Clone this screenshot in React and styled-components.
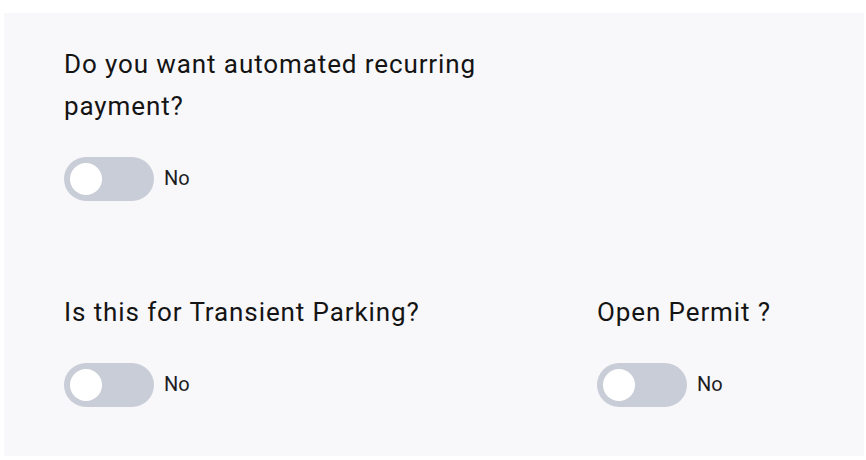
import React, { useState } from "react";
import styled, { createGlobalStyle } from "styled-components";

const Global = createGlobalStyle`
  html, body { margin: 0; padding: 0; background: #ffffff; }
  body { font-family: Roboto, "Liberation Sans", Arial, sans-serif; }
  * { box-sizing: border-box; }
`;

const Panel = styled.section`
  margin: 13px 0 0 4px;
  width: 860px;
  height: 443px;
  background: #f8f8fa;
  padding: 30px 0 0 60px;
  display: grid;
  grid-template-columns: 533px 1fr;
  grid-template-rows: auto auto;
  row-gap: 90px;
  align-content: start;
`;

const Field = styled.div`
  display: flex;
  flex-direction: column;
  gap: 30px;
  grid-column: ${(p) => (p.$full ? "1 / -1" : "auto")};
`;

const Question = styled.h3`
  margin: 0;
  font-family: Roboto, "Liberation Sans", sans-serif;
  font-size: 26px;
  letter-spacing: 0.9px;
  line-height: 42px;
  font-weight: 400;
  color: #141414;
  max-width: ${(p) => (p.$narrow ? "450px" : "none")};
`;

const ToggleRow = styled.label`
  display: flex;
  align-items: center;
  gap: 10px;
  cursor: pointer;
`;

const Track = styled.span`
  position: relative;
  display: inline-block;
  width: 90px;
  height: 44px;
  border-radius: 22px;
  background: ${(p) => (p.$on ? "#3b6fe0" : "#c9cdd8")};
  transition: background 0.2s;
  flex-shrink: 0;
`;

const Knob = styled.span`
  position: absolute;
  top: 6px;
  left: ${(p) => (p.$on ? "52px" : "6px")};
  width: 32px;
  height: 32px;
  border-radius: 50%;
  background: #ffffff;
  transition: left 0.2s;
`;

const StateText = styled.span`
  font-family: Roboto, "Liberation Sans", sans-serif;
  font-size: 20px;
  line-height: 24px;
  color: #1d1d1f;
  margin-top: -2px;
`;

function Toggle() {
  const [on, setOn] = useState(false);
  return (
    <ToggleRow onClick={() => setOn(!on)}>
      <Track $on={on}>
        <Knob $on={on} />
      </Track>
      <StateText>{on ? "Yes" : "No"}</StateText>
    </ToggleRow>
  );
}

export default function App() {
  return (
    <>
      <Global />
      <Panel>
        <Field $full>
          <Question $narrow>Do you want automated recurring payment?</Question>
          <Toggle />
        </Field>
        <Field>
          <Question>Is this for Transient Parking?</Question>
          <Toggle />
        </Field>
        <Field>
          <Question>Open Permit ?</Question>
          <Toggle />
        </Field>
      </Panel>
    </>
  );
}
